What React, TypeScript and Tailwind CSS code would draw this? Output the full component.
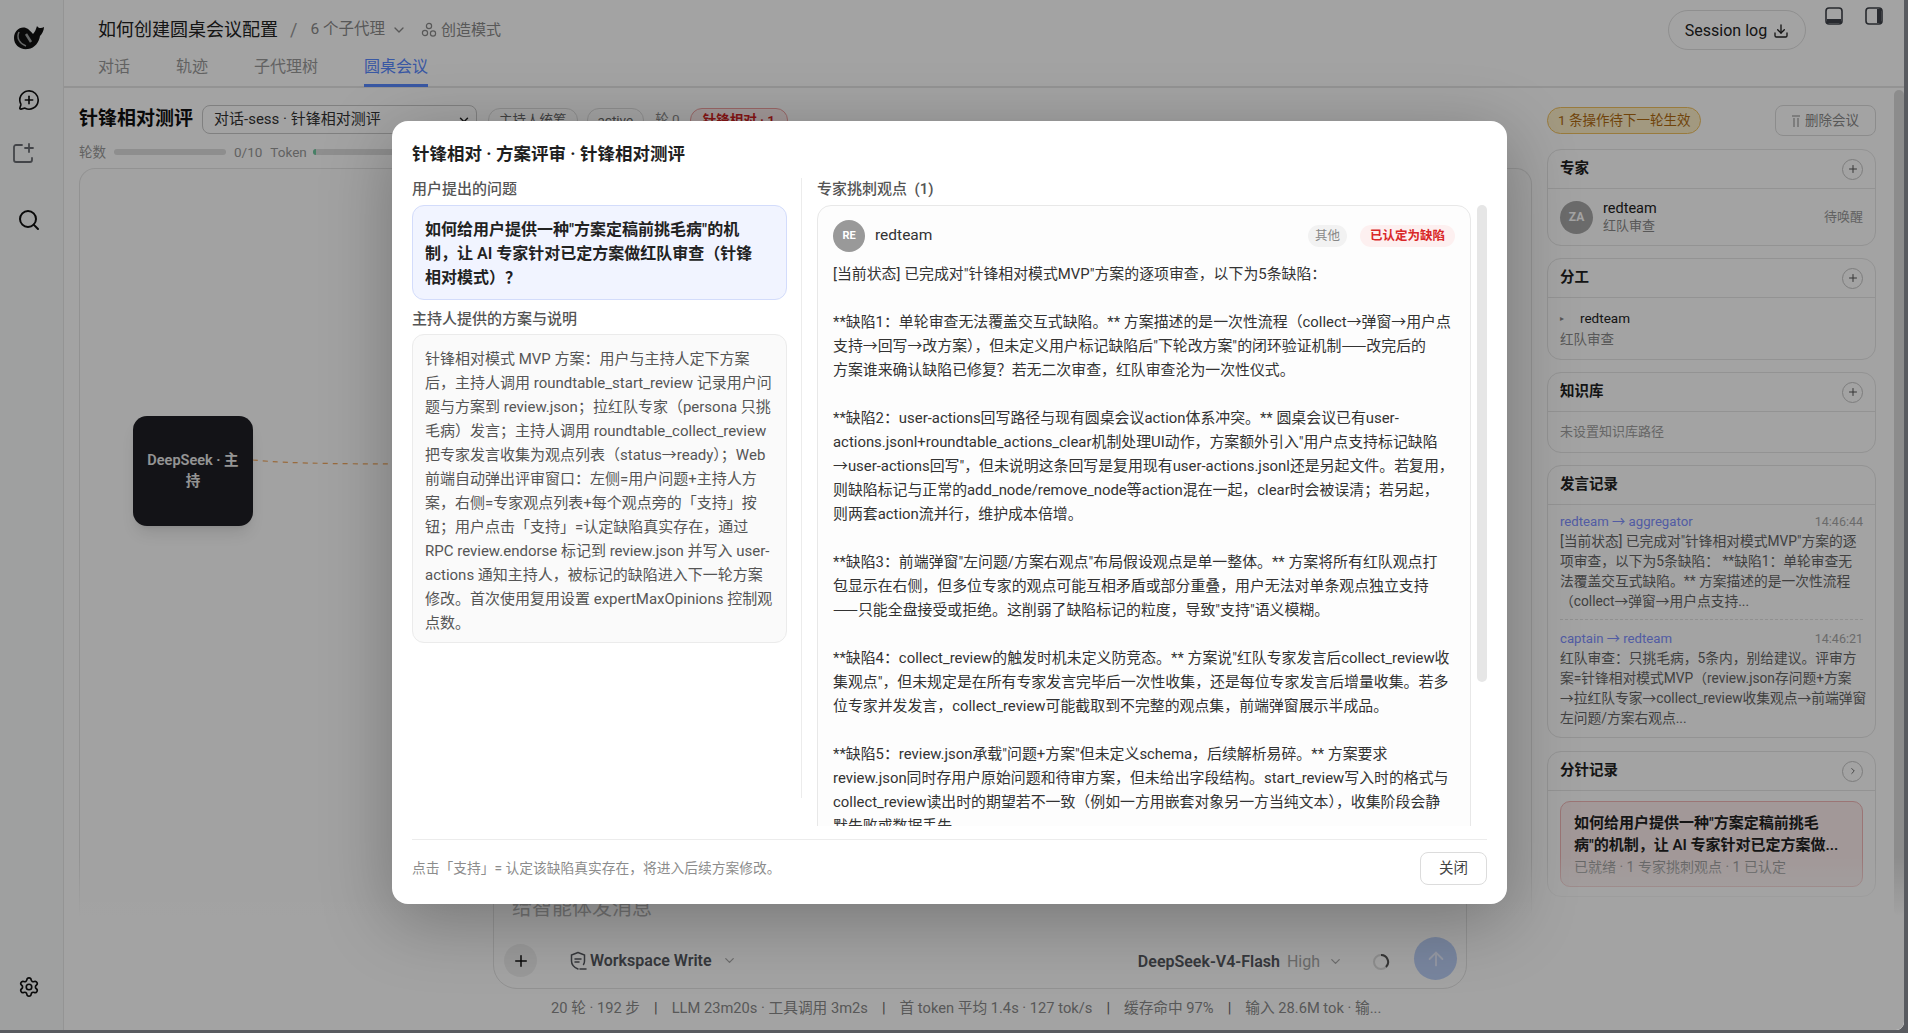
import { ChevronDown, ChevronRight, Download, MessageCirclePlus, Plus, Search, Settings, ArrowUp } from 'lucide-react';

const FONT = 'font-["Roboto","Noto_Sans_CJK_SC",sans-serif]';

const planText = `针锋相对模式 MVP 方案：用户与主持人定下方案
后，主持人调用 roundtable_start_review 记录用户问
题与方案到 review.json；拉红队专家（persona 只挑
毛病）发言；主持人调用 roundtable_collect_review
把专家发言收集为观点列表（status→ready）；Web
前端自动弹出评审窗口：左侧=用户问题+主持人方
案，右侧=专家观点列表+每个观点旁的「支持」按
钮；用户点击「支持」=认定缺陷真实存在，通过
RPC review.endorse 标记到 review.json 并写入 user-
actions 通知主持人，被标记的缺陷进入下一轮方案
修改。首次使用复用设置 expertMaxOpinions 控制观
点数。`;

const opinionText = `[当前状态] 已完成对"针锋相对模式MVP"方案的逐项审查，以下为5条缺陷：

**缺陷1：单轮审查无法覆盖交互式缺陷。** 方案描述的是一次性流程（collect→弹窗→用户点
支持→回写→改方案），但未定义用户标记缺陷后"下轮改方案"的闭环验证机制——改完后的
方案谁来确认缺陷已修复？若无二次审查，红队审查沦为一次性仪式。

**缺陷2：user-actions回写路径与现有圆桌会议action体系冲突。** 圆桌会议已有user-
actions.jsonl+roundtable_actions_clear机制处理UI动作，方案额外引入"用户点支持标记缺陷
→user-actions回写"，但未说明这条回写是复用现有user-actions.jsonl还是另起文件。若复用，
则缺陷标记与正常的add_node/remove_node等action混在一起，clear时会被误清；若另起，
则两套action流并行，维护成本倍增。

**缺陷3：前端弹窗"左问题/方案右观点"布局假设观点是单一整体。** 方案将所有红队观点打
包显示在右侧，但多位专家的观点可能互相矛盾或部分重叠，用户无法对单条观点独立支持
——只能全盘接受或拒绝。这削弱了缺陷标记的粒度，导致"支持"语义模糊。

**缺陷4：collect_review的触发时机未定义防竞态。** 方案说"红队专家发言后collect_review收
集观点"，但未规定是在所有专家发言完毕后一次性收集，还是每位专家发言后增量收集。若多
位专家并发发言，collect_review可能截取到不完整的观点集，前端弹窗展示半成品。

**缺陷5：review.json承载"问题+方案"但未定义schema，后续解析易碎。** 方案要求
review.json同时存用户原始问题和待审方案，但未给出字段结构。start_review写入时的格式与
collect_review读出时的期望若不一致（例如一方用嵌套对象另一方当纯文本），收集阶段会静
默失败或数据丢失。`;

const logs = [
  {
    from: 'redteam → aggregator',
    time: '14:46:44',
    text: `[当前状态] 已完成对"针锋相对模式MVP"方案的逐
项审查，以下为5条缺陷： **缺陷1：单轮审查无
法覆盖交互式缺陷。** 方案描述的是一次性流程
（collect→弹窗→用户点支持...`,
  },
  {
    from: 'captain → redteam',
    time: '14:46:21',
    text: `红队审查：只挑毛病，5条内，别给建议。评审方
案=针锋相对模式MVP（review.json存问题+方案
→拉红队专家→collect_review收集观点→前端弹窗
左问题/方案右观点...`,
  },
];

const stats = ['20 轮 · 192 步', 'LLM 23m20s · 工具调用 3m2s', '首 token 平均 1.4s · 127 tok/s', '缓存命中 97%', '输入 28.6M tok · 输...'];

function Whale() {
  return (
    <svg width="32" height="26" viewBox="0 0 32 26">
      <path d="M1 13C1 6 7 1 13 3c3 1 5 4 7 6 2-2 3-5 4-8 1 2 4 3 7 1 0 3-2 7-4 9-1 6-5 12-12 13C7 25 1 20 1 13Z" fill="#111" />
      <path d="M6 7c-3 6 1 12 7 14" stroke="#a0a3a3" strokeWidth="1.5" fill="none" />
      <path d="M13 9l5 8" stroke="#a0a3a3" strokeWidth="2.5" fill="none" />
    </svg>
  );
}

function FolderAdd() {
  return (
    <svg width="22" height="22" viewBox="0 0 22 22" fill="none" stroke="#6a6d72" strokeWidth="1.8" strokeLinecap="round">
      <path d="M10 3H4a2 2 0 0 0-2 2v13a2 2 0 0 0 2 2h14a2 2 0 0 0 2-2v-2" />
      <path d="M17 2v8M13 6h8" />
    </svg>
  );
}

function PanelIcon({ side }: { side: 'bottom' | 'right' }) {
  return (
    <svg width="20" height="20" viewBox="0 0 20 20" fill="none">
      <rect x="2" y="2" width="16" height="16" rx="3" stroke="#3f434a" strokeWidth="1.6" />
      {side === 'bottom' ? <rect x="3" y="13" width="14" height="4" fill="#3f434a" /> : <rect x="13" y="3" width="4" height="14" fill="#3f434a" />}
    </svg>
  );
}

function Shield() {
  return (
    <svg width="18" height="20" viewBox="0 0 18 20" fill="none" stroke="#55585e" strokeWidth="1.5" strokeLinecap="round">
      <path d="M9 1.5 15.5 4v6c0 1.500-.3 2.500-1 3.500M9 1.500 2.500 4v6c0 4 3 6.500 6.500 8" />
      <path d="M6 8h6M6 11h4M11 18h6" />
    </svg>
  );
}

function Card({ title, action, children }: { title: string; action?: 'plus' | 'chevron'; children: React.ReactNode }) {
  return (
    <div className="rounded-[14px] border border-[#e6e6e6]">
      <div className="flex h-[39px] items-center justify-between border-b border-[#e6e6e6] px-3">
        <span className="text-[14.5px] font-semibold text-[#222]">{title}</span>
        {action && (
          <span className="flex h-[21px] w-[21px] items-center justify-center rounded-full border border-[#c4c4c4] text-[#555]">
            {action === 'plus' ? <Plus size={12} /> : <ChevronRight size={10} />}
          </span>
        )}
      </div>
      {children}
    </div>
  );
}

function RightPanel() {
  return (
    <div className="flex w-[329px] flex-col gap-[12px]">
      <div className="mb-px flex h-[31px] items-center justify-between">
        <span className="rounded-full border border-[#f0c060] bg-[#fdf0c8] px-[10px] py-[2px] text-[13.5px] text-[#b06a10]">1 条操作待下一轮生效</span>
        <span className="flex h-[31px] w-[101px] items-center justify-center gap-[5px] rounded-lg border border-[#dcdcdc] text-[13.5px] text-[#8a8a8a]">
          <svg width="8" height="12" viewBox="0 0 8 12" fill="#c4c4c4"><rect x="0" y="0" width="8" height="2" /><rect x="1" y="3" width="2" height="9" /><rect x="5" y="3" width="2" height="9" /></svg>
          删除会议
        </span>
      </div>
      <Card title="专家" action="plus">
        <div className="flex h-[56px] items-center gap-[10px] px-3">
          <span className="flex h-[33px] w-[33px] shrink-0 items-center justify-center rounded-full bg-[#a8a8a8] text-[12px] font-bold text-white">ZA</span>
          <div className="flex-1 leading-[17px]">
            <div className="text-[14.5px] text-[#222]">redteam</div>
            <div className="text-[13px] text-[#8a8a8a]">红队审查</div>
          </div>
          <span className="text-[13px] text-[#9a9a9a]">待唤醒</span>
        </div>
      </Card>
      <Card title="分工" action="plus">
        <div className="h-[61px] px-3 pt-[10px] text-[13.5px] leading-[21px]">
          <div className="flex items-center gap-[16px] text-[#222]"><span className="text-[8px] text-[#888]">▸</span>redteam</div>
          <div className="text-[#8a8a8a]">红队审查</div>
        </div>
      </Card>
      <Card title="知识库" action="plus">
        <div className="flex h-[40px] items-center px-3 text-[13px] text-[#a0a0a0]">未设置知识库路径</div>
      </Card>
      <Card title="发言记录">
        <div className="px-3 pb-[9px] pt-[7px]">
          {logs.map((log, i) => (
            <div key={log.from} className={i === 0 ? 'border-b border-dashed border-[#e2e2e2] pb-[8px]' : 'pt-[9px]'}>
              <div className="flex items-center justify-between text-[13.2px] leading-[19px]">
                <span className="text-[#8090ff]">{log.from}</span>
                <span className="text-[12.5px] text-[#a8a8a8]">{log.time}</span>
              </div>
              <div className="whitespace-pre text-[13.75px] leading-[20px] text-[#666]">{log.text}</div>
            </div>
          ))}
        </div>
      </Card>
      <div className="mt-px">
        <Card title="分针记录" action="chevron">
          <div className="px-3 pb-[9px] pt-[10px]">
            <div className="rounded-[10px] border border-[#f2b8b8] bg-[#fdeeee] px-[13px] pb-[8px] pt-[10px]">
              <div className="whitespace-pre text-[15px] font-semibold leading-[22px] text-[#222]">{'如何给用户提供一种"方案定稿前挑毛\n病"的机制，让 AI 专家针对已定方案做...'}</div>
              <div className="text-[14px] leading-[22px] text-[#999]">已就绪 · 1 专家挑刺观点 · 1 已认定</div>
            </div>
          </div>
        </Card>
      </div>
    </div>
  );
}

function Composer() {
  return (
    <div className="relative -mt-[60px] h-[173px] bg-gradient-to-b from-transparent to-white to-[35%] pt-[22px]">
      <div className="ml-[429px] h-[110px] w-[974px] rounded-[24px] border border-[#e4e4e4] bg-white">
        <div className="h-[50px] pl-[18px] pt-[14px] text-[20px] leading-[28px] text-[#b4b4b4]">给智能体发消息</div>
        <div className="flex items-start justify-between pl-[10px] pr-[9px] pt-[7px]">
          <div className="mt-[7px] flex items-center">
            <span className="flex h-[33px] w-[33px] items-center justify-center rounded-full bg-[#f0f0f0]"><Plus size={18} color="#111" /></span>
            <span className="ml-[32px] mr-[3px]"><Shield /></span>
            <span className="text-[16px] font-semibold text-[#55585e]">Workspace Write</span>
            <ChevronDown size={15} className="ml-[10px] text-[#aaa]" />
          </div>
          <div className="flex items-start">
            <div className="flex h-[43px] items-center pt-[6px]">
              <span className="text-[16px] font-semibold text-[#55585e]">DeepSeek-V4-Flash</span>
              <span className="ml-[7px] text-[16px] text-[#a8a8a8]">High</span>
              <ChevronDown size={15} className="ml-2 text-[#aaa]" />
              <svg className="ml-[29px] mr-[24px]" width="18" height="18" viewBox="0 0 18 18" fill="none">
                <circle cx="9" cy="9" r="7" stroke="#ddd" strokeWidth="2" />
                <path d="M9 2a7 7 0 0 1 5 12" stroke="#555" strokeWidth="2" />
              </svg>
            </div>
            <span className="flex h-[43px] w-[43px] items-center justify-center rounded-full bg-[#bcd0f8]"><ArrowUp size={22} color="#e8eeff" /></span>
          </div>
        </div>
      </div>
      <div className="ml-[487px] mt-[9px] flex items-center whitespace-pre text-[14.7px] leading-[20px] text-[#8a8a8a]">
        {stats.map((s, i) => (
          <span key={s}>
            {i > 0 && <span className="mx-[14px] text-[#666]">|</span>}
            {s}
          </span>
        ))}
      </div>
    </div>
  );
}

function Modal() {
  return (
    <div className="absolute inset-0 flex items-center justify-center bg-black/[.36] pb-[5px] pr-[5px]">
      <div className="flex h-[783px] w-[1115px] flex-col rounded-[16px] bg-white px-5 pt-[21px] shadow-[0_16px_70px_rgba(0,0,0,0.28)]">
        <h2 className="h-[25px] text-[17.5px] font-bold leading-[25px] text-[#1f1f1f]">针锋相对 · 方案评审 · 针锋相对测评</h2>
        <div className="mt-[11px] flex h-[648px]">
          <div className="h-[620px] w-[390px] shrink-0 border-r border-[#ececec] pr-[14px]">
            <div className="h-[27px] pt-px text-[15px] font-medium leading-[20px] text-[#555]">用户提出的问题</div>
            <div className="h-[95px] whitespace-pre rounded-[12px] border border-[#d3dcfb] bg-[#f1f4ff] px-3 pb-[10px] pt-[12px] text-[16px] font-semibold leading-[24px] text-[#222]">{'如何给用户提供一种"方案定稿前挑毛病"的机\n制，让 AI 专家针对已定方案做红队审查（针锋\n相对模式）？'}</div>
            <div className="mt-[5px] h-[29px] pt-[4px] text-[15px] font-medium leading-[20px] text-[#555]">主持人提供的方案与说明</div>
            <div className="h-[309px] whitespace-pre rounded-[12px] border border-[#ebebeb] bg-[#fafafa] px-3 pb-[10px] pt-[12px] text-[15px] leading-[24px] text-[#555]">{planText}</div>
          </div>
          <div className="min-w-0 flex-1 overflow-hidden pl-[15px]">
            <div className="h-[27px] whitespace-pre pt-px text-[15px] font-medium leading-[20px] text-[#555]">专家挑刺观点  (1)</div>
            <div className="flex gap-[6px]">
              <div className="h-[640px] w-[654px] shrink-0 rounded-t-[14px] border border-[#e8e8e8] bg-[#fdfdfd] px-[15px] pt-[14px]">
                <div className="flex h-[32px] items-center">
                  <span className="flex h-[32px] w-[32px] items-center justify-center rounded-full bg-[#999] text-[11px] font-bold text-white">RE</span>
                  <span className="ml-[10px] flex-1 text-[15.5px] text-[#333]">redteam</span>
                  <span className="rounded-full bg-[#f2f2f2] px-[7px] text-[12.5px] leading-[22px] text-[#888]">其他</span>
                  <span className="ml-[13px] rounded-full bg-[#fdf0f0] px-[10px] text-[12.5px] font-semibold leading-[22px] text-[#d92828]">已认定为缺陷</span>
                </div>
                <div className="mt-[10px] whitespace-pre text-[14.9px] leading-[24px] text-[#333]">
                  {opinionText.split(/(——)/).map((part, i) =>
                    part === '——' ? <span key={i} className='font-["Noto_Sans_CJK_SC"] leading-none'>{part}</span> : part,
                  )}
                </div>
              </div>
              <div className="h-[477px] w-[10px] rounded-full bg-[#e6e6e6]" />
            </div>
          </div>
        </div>
        <div className="mt-[13px] flex h-[45px] items-start justify-between border-t border-[#ececec] pt-[12px]">
          <span className="pt-[7px] text-[13.75px] leading-[18px] text-[#8c8c8c]">点击「支持」= 认定该缺陷真实存在，将进入后续方案修改。</span>
          <span className="flex h-[33px] w-[67px] items-center justify-center rounded-lg border border-[#dcdcdc] text-[14.5px] text-[#444]">关闭</span>
        </div>
      </div>
    </div>
  );
}

export default function App() {
  return (
    <div className={`h-[1033px] w-[1908px] overflow-hidden bg-[#595b60] ${FONT}`}>
      <div className="relative flex h-[1030px] w-[1904px] overflow-hidden rounded-br-lg bg-white">
        <aside className="flex h-full w-[64px] shrink-0 flex-col border-r border-[#e8e8e8] bg-[#f9fbfb]">
          <div className="ml-[13px] mt-[25px]"><Whale /></div>
          <div className="ml-[18px] mt-[38px]"><MessageCirclePlus size={22} color="#111" strokeWidth={1.8} /></div>
          <div className="ml-[12px] mt-[31px]"><FolderAdd /></div>
          <div className="ml-[17px] mt-[44px]"><Search size={24} color="#111" strokeWidth={2} /></div>
          <div className="ml-[18px] mt-auto mb-[32px]"><Settings size={22} color="#111" strokeWidth={1.8} /></div>
        </aside>

        <main className="flex min-w-0 flex-1 flex-col">
          <header className="flex h-[88px] shrink-0 justify-between border-b-2 border-[#e6e6e6] pl-[34px]">
            <div>
              <div className="flex h-[30px] items-center pt-[30px] leading-none">
                <span className="text-[18px] text-[#222]">如何创建圆桌会议配置</span>
                <span className="ml-[12px] text-[18px] text-[#999]">/</span>
                <span className="ml-[13px] text-[15.5px] text-[#8a8a8a]">6 个子代理</span>
                <ChevronDown size={16} className="ml-[6px] text-[#8a8a8a]" />
                <svg className="ml-[14px]" width="16" height="16" viewBox="0 0 16 16" fill="none" stroke="#8a8a8a" strokeWidth="1.2">
                  <circle cx="8" cy="4" r="2.600" />
                  <circle cx="4" cy="11" r="2.600" />
                  <circle cx="12" cy="11.500" r="2.600" />
                </svg>
                <span className="ml-[4px] text-[15px] text-[#8a8a8a]">创造模式</span>
              </div>
              <nav className="mt-[10px] flex gap-[46px] pt-[15px] text-[16px]">
                <span className="h-[32px] text-[#9a9a9a]">对话</span>
                <span className="h-[32px] text-[#9a9a9a]">轨迹</span>
                <span className="h-[32px] text-[#9a9a9a]">子代理树</span>
                <span className="h-[32px] border-b-[3px] border-[#5a8aff] text-[#5a8aff]">圆桌会议</span>
              </nav>
            </div>
            <div className="flex items-start pt-[10px]">
              <span className="flex h-[40px] w-[138px] items-center justify-center gap-[6px] rounded-full border border-[#e0e0e0] pt-[2px] text-[16px] text-[#222]">Session log <Download size={16} color="#222" /></span>
              <span className="-mt-[4px] ml-[18px]"><PanelIcon side="bottom" /></span>
              <span className="-mt-[4px] ml-[20px] mr-[20px]"><PanelIcon side="right" /></span>
            </div>
          </header>

          <div className="flex h-[829px] shrink-0">
            <div className="flex min-w-0 flex-1 gap-[15px] pl-[15px] pr-[18px] pt-[17px]">
              <div className="flex min-w-0 flex-1 flex-col">
                <div className="flex h-[29px] items-center whitespace-nowrap">
                  <span className="text-[19px] font-bold text-[#111]">针锋相对测评</span>
                  <span className="ml-[9px] flex h-[29px] w-[275px] items-center justify-between rounded-lg border border-[#c8c8c8] pl-[11px] pr-[5px] text-[15px] text-[#333]">对话-sess · 针锋相对测评<ChevronDown size={14} color="#222" strokeWidth={2.5} /></span>
                  <span className="ml-[11px] rounded-full border border-[#ddd] px-[10px] text-[13.5px] leading-[22px] text-[#666]">主持人统筹</span>
                  <span className="ml-[9px] rounded-full border border-[#ddd] px-[10px] text-[13.5px] leading-[22px] text-[#666]">active</span>
                  <span className="ml-[11px] text-[13.5px] text-[#888]">轮 0</span>
                  <span className="ml-[10px] rounded-full border border-[#f0a0a0] bg-[#fdeeee] px-[12px] text-[13.5px] font-semibold leading-[22px] text-[#d02020]">针锋相对 · 1</span>
                </div>
                <div className="mt-[9px] flex h-[18px] items-center whitespace-nowrap text-[13.5px] text-[#999]">
                  <span>轮数</span>
                  <span className="ml-[8px] h-[6px] w-[112px] rounded-full bg-[#dedede]" />
                  <span className="ml-[8px]">0/10</span>
                  <span className="ml-[8px]">Token</span>
                  <span className="ml-[6px] h-[6px] w-[112px] overflow-hidden rounded-full bg-[#dedede]"><span className="block h-full w-[3px] bg-[#6fc8a0]" /></span>
                </div>
                <div className="relative mt-[7px] flex-1 rounded-t-[16px] border border-b-0 border-[#e5e5e5] bg-[#fdfdfd]">
                  <div className="absolute left-[53px] top-[247px] flex h-[110px] w-[120px] items-center justify-center rounded-[14px] bg-[#1f1f24] px-[10px] text-center text-[14.5px] font-semibold leading-[21px] text-[#e8e8e8] shadow-lg">DeepSeek · 主持</div>
                  <svg className="absolute left-[173px] top-[289px]" width="200" height="12" fill="none">
                    <path d="M0 2C40 6 100 6 200 6" stroke="#f0a860" strokeWidth="1.200" strokeDasharray="5 5" />
                  </svg>
                </div>
              </div>
              <RightPanel />
            </div>
            <div className="mt-[2px] h-[825px] w-[10px] rounded-full bg-[#dcdcdc]" />
          </div>

          <Composer />
        </main>

        <Modal />
      </div>
    </div>
  );
}
